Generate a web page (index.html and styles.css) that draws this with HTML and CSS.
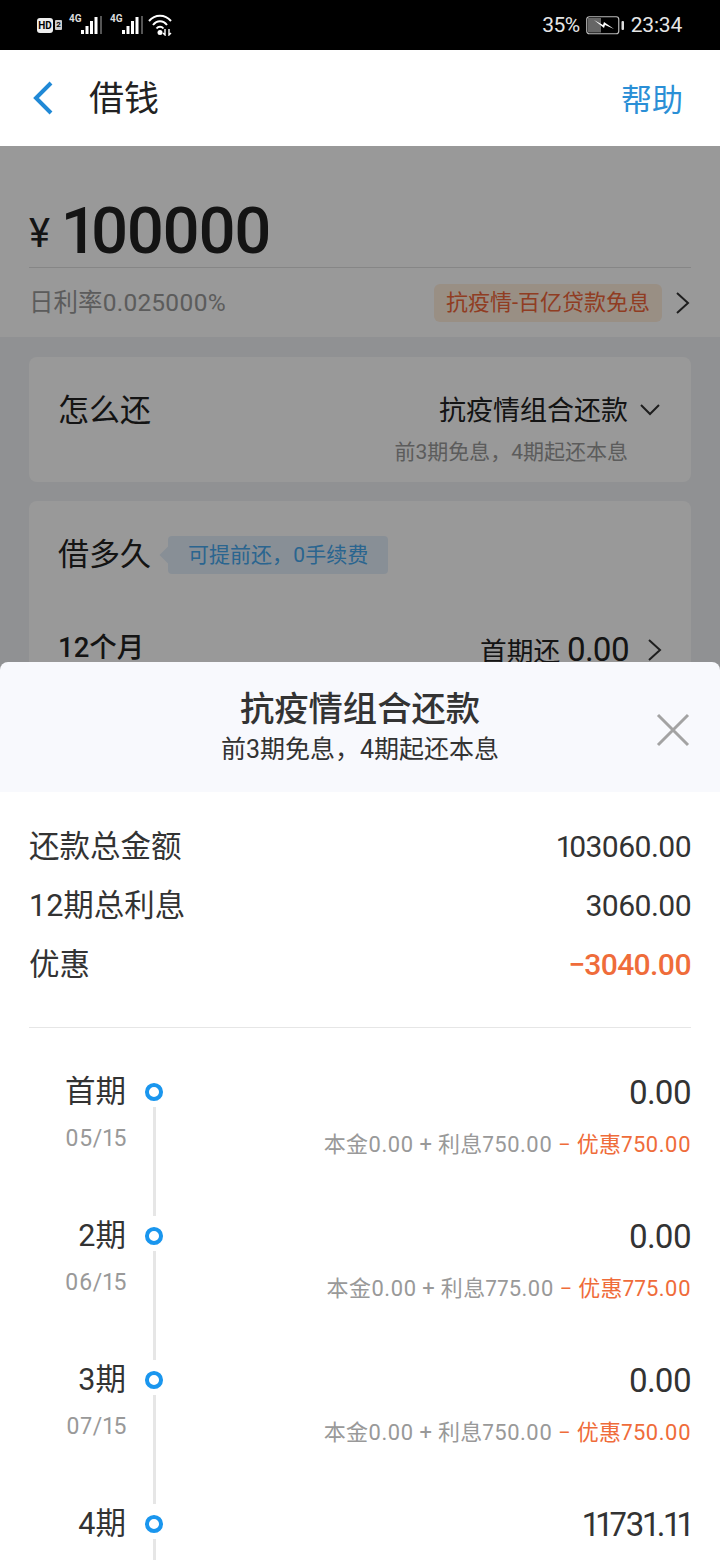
FILE: index.html
```html
<!DOCTYPE html>
<html>
<head>
  <meta charset="utf-8">
  <title>借钱</title>
  <link rel="stylesheet" href="styles.css">
</head>
<body>
  <div class="status">
    <div class="status-left">
      <span class="hd">HD</span><span class="sim">2</span>
      <span class="net">
        <span class="net-label">4G</span>
        <svg width="21" height="20" viewBox="0 0 21 20"><g fill="#fff"><rect x="0" y="14" width="3" height="4"/><rect x="4.500" y="10" width="3" height="8"/><rect x="9" y="5" width="3" height="13"/><rect x="13.500" y="1" width="3" height="17"/></g><rect x="19" y="-2" width="2" height="20" fill="#555"/></svg>
      </span>
      <span class="net">
        <span class="net-label">4G</span>
        <svg width="21" height="20" viewBox="0 0 21 20"><g fill="#fff"><rect x="0" y="14" width="3" height="4"/><rect x="4.500" y="10" width="3" height="8"/><rect x="9" y="5" width="3" height="13"/><rect x="13.500" y="1" width="3" height="17"/></g><rect x="19" y="-2" width="2" height="20" fill="#555"/></svg>
      </span>
      <svg class="wifi" width="26" height="22" viewBox="0 0 26 22"><g fill="none" stroke="#fff" stroke-width="2"><path d="M1 7C7 0 17 0 23 7"/><path d="M5 11C9 6 15 6 19 11"/><path d="M8.500 14.500C10.500 12 13.500 12 15.500 14.500"/></g><circle cx="12" cy="18.500" r="2.500" fill="#fff"/><path d="M17 15v6l-2-2M21 15v6l2-2" stroke="#fff" stroke-width="1.400" fill="none"/></svg>
    </div>
    <div class="status-right">
      <span class="pct">35%</span>
      <svg width="39" height="19" viewBox="0 0 39 19"><rect x="0.750" y="0.750" width="32" height="17" rx="2.500" fill="none" stroke="#bbb" stroke-width="1.200"/><rect x="2" y="2" width="13" height="14.500" fill="#666"/><path d="M8 4l9 5 1-3 10 7-9-4-1 3z" fill="#fff"/><rect x="35.500" y="5" width="2.500" height="9" rx="1" fill="#ddd"/></svg>
      <span class="clock">23:34</span>
    </div>
  </div>

  <div class="header">
    <svg class="back" width="24" height="34" viewBox="0 0 24 34"><path d="M21 2L6 17l15 15" fill="none" stroke="#2089d6" stroke-width="4"/></svg>
    <div class="title">借钱</div>
    <div class="help">帮助</div>
  </div>

  <div class="behind">
    <div class="hero">
      <div class="amount-row"><span class="currency">¥</span><span class="amount">100000</span></div>
      <div class="rate-row">
        <span class="rate">日利率0.025000%</span>
        <span class="promo">抗疫情-百亿贷款免息</span>
        <svg width="16" height="24" viewBox="0 0 16 24"><path d="M2 2l11 10L2 22" fill="none" stroke="#333" stroke-width="2"/></svg>
      </div>
    </div>

    <div class="card card-how">
      <div class="card-title">怎么还</div>
      <div class="how-right">
        <div class="how-value">抗疫情组合还款</div>
        <div class="how-note">前3期免息，4期起还本息</div>
      </div>
      <svg class="how-arrow" width="22" height="14" viewBox="0 0 22 14"><path d="M2 2l9 9 9-9" fill="none" stroke="#333" stroke-width="2"/></svg>
    </div>

    <div class="card card-long">
      <div class="long-head">
        <div class="card-title">借多久</div>
        <div class="tip">可提前还，0手续费</div>
      </div>
      <div class="long-row">
        <span class="months">12个月</span>
        <span class="first">首期还 <b>0.00</b></span>
        <svg class="first-arrow" width="16" height="24" viewBox="0 0 16 24"><path d="M2 2l11 10L2 22" fill="none" stroke="#333" stroke-width="2"/></svg>
      </div>
    </div>

    <div class="scrim"></div>
  </div>

  <div class="sheet">
    <div class="sheet-head">
      <div class="sheet-title">抗疫情组合还款</div>
      <div class="sheet-sub">前3期免息，4期起还本息</div>
      <svg class="close" width="34" height="34" viewBox="0 0 34 34"><path d="M2 2l30 30M32 2L2 32" stroke="#a3a3a3" stroke-width="3" fill="none"/></svg>
    </div>

    <div class="totals">
      <div class="total-row"><span class="total-label">还款总金额</span><span class="num">103060.00</span></div>
      <div class="total-row"><span class="total-label">12期总利息</span><span class="num">3060.00</span></div>
      <div class="total-row"><span class="total-label">优惠</span><span class="num discount">−3040.00</span></div>
    </div>

    <div class="plan">
      <div class="plan-row">
        <div class="plan-date"><div class="term">首期</div><div class="date">05/15</div></div>
        <div class="plan-mark"><span class="dot"></span><span class="line"></span></div>
        <div class="plan-money">
          <div class="money">0.00</div>
          <div class="detail">本金0.00 + 利息750.00 <em>− 优惠750.00</em></div>
        </div>
      </div>
      <div class="plan-row">
        <div class="plan-date"><div class="term">2期</div><div class="date">06/15</div></div>
        <div class="plan-mark"><span class="dot"></span><span class="line"></span></div>
        <div class="plan-money">
          <div class="money">0.00</div>
          <div class="detail">本金0.00 + 利息775.00 <em>− 优惠775.00</em></div>
        </div>
      </div>
      <div class="plan-row">
        <div class="plan-date"><div class="term">3期</div><div class="date">07/15</div></div>
        <div class="plan-mark"><span class="dot"></span><span class="line"></span></div>
        <div class="plan-money">
          <div class="money">0.00</div>
          <div class="detail">本金0.00 + 利息750.00 <em>− 优惠750.00</em></div>
        </div>
      </div>
      <div class="plan-row">
        <div class="plan-date"><div class="term">4期</div></div>
        <div class="plan-mark"><span class="dot"></span><span class="line"></span></div>
        <div class="plan-money">
          <div class="money">11731.11</div>
        </div>
      </div>
    </div>
  </div>
</body>
</html>
```

FILE: styles.css
```css
* {
  box-sizing: border-box;
}
html, body {
  margin: 0;
  height: 1560px;
  overflow: hidden;
}
body {
  font-family: Roboto, "Noto Sans CJK SC", sans-serif;
  font-variant-numeric: proportional-nums;
  background-color: #fff;
  color: #333;
}
.status {
  height: 50px;
  background-color: #000;
  color: #e6e6e6;
  display: flex;
  justify-content: space-between;
  align-items: center;
  padding: 0 38px 0 37px;
}
.status-left {
  display: flex;
  align-items: center;
}
.hd {
  width: 16px;
  height: 15px;
  border-radius: 3px;
  background-color: #eee;
  color: #000;
  font-size: 10px;
  font-weight: 700;
  line-height: 15px;
  text-align: center;
}
.sim {
  width: 7px;
  height: 10px;
  margin-left: 2px;
  background-color: #ccc;
  border-radius: 1px;
  color: #000;
  font-size: 8px;
  font-weight: 700;
  line-height: 10px;
  text-align: center;
}
.net {
  display: flex;
  align-items: flex-end;
  height: 22px;
  margin-left: 7px;
}
.net + .net {
  margin-left: 8px;
}
.net-label {
  align-self: flex-start;
  width: 12px;
  font-size: 10px;
  line-height: 10px;
  font-weight: 700;
  color: #ddd;
}
.wifi {
  margin-left: 5px;
}
.status-right {
  display: flex;
  align-items: center;
  gap: 6px;
  font-size: 21px;
}
.pct {
  letter-spacing: -0.5px;
}
.clock {
  letter-spacing: -0.2px;
}
.header {
  height: 96px;
  display: flex;
  align-items: center;
  padding: 0 37px 0 30px;
  background-color: #fff;
}
.title {
  flex: 1;
  margin-left: 35px;
  margin-bottom: 6px;
  font-size: 35px;
  color: #222;
}
.help {
  margin-bottom: 2px;
  font-size: 31px;
  color: #2b8fd6;
}
.behind {
  position: relative;
  height: 524px;
  overflow: hidden;
  background-color: #f0f2f5;
}
.scrim {
  position: absolute;
  top: 0;
  right: 0;
  bottom: 0;
  left: 0;
  background-color: rgba(0, 0, 0, 0.4);
}
.hero {
  height: 191px;
  padding: 48px 29px 0;
  background-color: #fff;
}
.amount-row {
  height: 74px;
  display: flex;
  align-items: center;
  border-bottom: 1px solid #e0e0e0;
}
.currency {
  font-size: 40px;
  margin-right: 13px;
  margin-top: 6px;
  color: #222;
}
.amount {
  font-size: 65px;
  font-weight: 500;
  letter-spacing: -2.400px;
  color: #222;
}
.rate-row {
  display: flex;
  align-items: center;
  margin-top: 15px;
}
.rate {
  flex: 1;
  margin-bottom: 4px;
  font-size: 24.500px;
  color: #999;
}
.promo {
  height: 38px;
  line-height: 38px;
  padding: 0 12px;
  margin-right: 13px;
  border-radius: 6px;
  background-color: #ffeedd;
  color: #f1663a;
  font-size: 22px;
}
.card {
  margin: 0 29px 19px;
  background-color: #fff;
  border-radius: 8px;
}
.hero + .card {
  margin-top: 20px;
}
.card-how {
  height: 125px;
  padding: 30px 30px 0 29px;
  display: flex;
  align-items: flex-start;
}
.card-title {
  font-size: 31px;
  line-height: 48px;
  color: #222;
}
.how-right {
  margin-left: auto;
  text-align: right;
}
.how-value {
  font-size: 27px;
  line-height: 48px;
  color: #222;
}
.how-note {
  font-size: 21px;
  color: #999;
}
.how-arrow {
  margin: 16px 0 0 11px;
}
.card-long {
  height: 240px;
  padding: 30px 28px 0 29px;
}
.long-head {
  display: flex;
  align-items: center;
}
.tip {
  position: relative;
  height: 38px;
  line-height: 38px;
  margin-left: 17px;
  padding: 0 20px;
  border-radius: 4px;
  background-color: #e3effb;
  color: #46a8ef;
  font-size: 21px;
}
.tip::before {
  content: "";
  position: absolute;
  left: -6px;
  top: 13px;
  width: 12px;
  height: 12px;
  transform: rotate(45deg);
  background-color: #e3effb;
}
.long-row {
  display: flex;
  align-items: flex-start;
  margin-top: 48px;
}
.months {
  flex: 1;
  font-size: 27.500px;
  line-height: 42px;
  font-weight: 500;
  font-variant-numeric: tabular-nums;
  color: #222;
}
.first {
  margin-right: 18px;
  font-size: 26.700px;
  line-height: 46px;
  color: #222;
}
.first b {
  font-size: 33px;
  font-weight: 400;
  letter-spacing: -1px;
}
.first-arrow {
  margin-top: 11px;
}
.sheet {
  position: relative;
  margin-top: -8px;
  height: 898px;
  overflow: hidden;
}
.sheet-head {
  position: relative;
  height: 130px;
  padding-top: 23px;
  background-color: #f8f9fd;
  border-radius: 8px 8px 0 0;
  text-align: center;
}
.sheet-title {
  font-size: 34.300px;
  line-height: 48px;
  font-weight: 500;
  color: #333;
}
.sheet-sub {
  font-size: 25px;
  line-height: 34px;
  color: #333;
}
.close {
  position: absolute;
  right: 30px;
  top: 51px;
}
.totals {
  margin: 0 29px;
  padding: 25px 0 33px;
  border-bottom: 1px solid #e6e6e6;
}
.total-row {
  height: 59px;
  display: flex;
  justify-content: space-between;
  align-items: center;
  color: #333;
}
.total-label {
  margin-bottom: 6px;
  font-size: 30.500px;
  font-variant-numeric: tabular-nums;
}
.num {
  font-size: 30px;
  letter-spacing: -0.900px;
}
.discount {
  color: #ef6c3a;
  font-weight: 500;
}
.plan {
  padding: 44px 29px 0 0;
}
.plan-row {
  height: 144px;
  display: flex;
}
.plan-date {
  width: 127px;
  text-align: right;
}
.term {
  padding-right: 1px;
  font-size: 30.500px;
  line-height: 40px;
  color: #333;
}
.date {
  margin-top: 13px;
  font-size: 23px;
  letter-spacing: 0.600px;
  color: #999;
}
.plan-mark {
  width: 54px;
  display: flex;
  flex-direction: column;
  align-items: center;
  padding-top: 11px;
}
.dot {
  width: 18px;
  height: 18px;
  border: 4px solid #1a96ee;
  border-radius: 50%;
}
.line {
  width: 3px;
  height: 113px;
  margin-top: 6px;
  background-color: #e6e6e6;
}
.plan-money {
  flex: 1;
  text-align: right;
}
.money {
  font-size: 33px;
  line-height: 42px;
  letter-spacing: -1px;
  color: #333;
}
.detail {
  margin-top: 12px;
  font-size: 22px;
  letter-spacing: 0.300px;
  color: #999;
}
.detail em {
  font-style: normal;
  color: #ef6c3a;
}
```
